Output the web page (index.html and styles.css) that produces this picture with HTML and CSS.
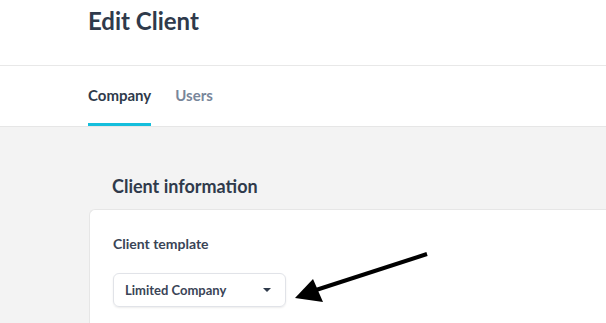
FILE: index.html
```html
<!DOCTYPE html>
<html>
<head>
    <title>Edit Client</title>
    <link rel="stylesheet" href="styles.css">
</head>
<body>
    <div class="page-head">
        <h1>Edit Client</h1>
    </div>
    <div class="tabs">
        <a class="tab active" href="#">Company</a>
        <a class="tab" href="#">Users</a>
    </div>
    <div class="main">
        <h2>Client information</h2>
        <div class="card">
            <label class="field-label">Client template</label>
            <div class="select">
                <span>Limited Company</span>
                <span class="caret"></span>
            </div>
        </div>
    </div>

    <svg class="pointer" width="606" height="323" viewBox="0 0 606 323">
        <line x1="427" y1="254" x2="316" y2="290" stroke="#000" stroke-width="4"/>
        <polygon points="295,298 313,279 323,302" fill="#000"/>
    </svg>
</body>
</html>
```

FILE: styles.css
```css
body {
    margin: 0;
    font-family: Lato, "Open Sans", sans-serif;
    background: #f3f3f3;
    color: #2f3a4b;
    height: 323px;
    overflow: hidden;
}
.page-head {
    background: #fff;
    height: 66px;
    padding-left: 88px;
    border-bottom: 1px solid #e8e8e8;
    box-sizing: border-box;
}
h1 {
    margin: 0;
    padding-top: 6px;
    font-size: 24px;
    line-height: 30px;
    font-weight: 700;
}
.tabs {
    background: #fff;
    height: 61px;
    padding-left: 88px;
    border-bottom: 1px solid #e6e6e6;
    display: flex;
    align-items: flex-end;
    gap: 24px;
    box-sizing: border-box;
}
.tab {
    font-size: 15px;
    font-weight: 700;
    color: #78869a;
    text-decoration: none;
    padding-bottom: 19px;
    border-bottom: 3px solid transparent;
}
.tab.active {
    color: #2f3a4b;
    border-bottom-color: #14bedc;
}
.main {
    padding: 48px 0 0 89px;
}
h2 {
    margin: 0 0 0 23px;
    font-size: 18px;
    line-height: 22px;
    font-weight: 700;
}
.card {
    margin-top: 12px;
    background: #fff;
    border: 1px solid #e6e6e6;
    border-right: none;
    border-radius: 6px 0 0 0;
    padding: 25px 23px 16px;
}
.field-label {
    display: block;
    font-size: 14px;
    font-weight: 700;
    color: #3a4456;
    line-height: 18px;
}
.select {
    margin-top: 20px;
    width: 173px;
    height: 34px;
    box-sizing: border-box;
    border: 1px solid #e1e3e8;
    border-radius: 6px;
    box-shadow: 0 1px 2px rgba(0, 0, 0, 0.08);
    display: flex;
    align-items: center;
    justify-content: space-between;
    padding: 0 14px 0 11px;
    font-size: 13px;
    font-weight: 700;
    color: #3a4456;
}
.caret {
    width: 0;
    height: 0;
    border-left: 4px solid transparent;
    border-right: 4px solid transparent;
    border-top: 4px solid #2f3a4b;
}
.pointer {
    position: absolute;
    left: 0;
    top: 0;
}
```
